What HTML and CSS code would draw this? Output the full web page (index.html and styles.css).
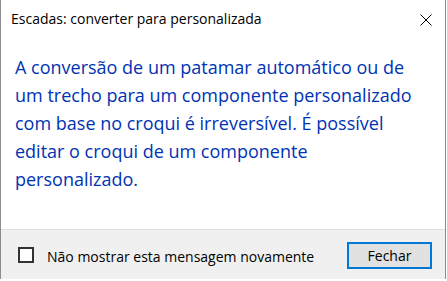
FILE: index.html
```html
<!DOCTYPE html>
<html lang="pt">
<head>
<meta charset="utf-8">
<title>Escadas: converter para personalizada</title>
<link rel="stylesheet" href="styles.css">
</head>
<body>
<div class="window">
  <div class="titlebar">
    <span class="title">Escadas: converter para personalizada</span>
    <span class="close" aria-label="Fechar">
      <svg width="12" height="12" viewBox="0 0 12 12"><path d="M0.5 0.5 L11.5 11.5 M11.5 0.5 L0.5 11.5" stroke="#000" stroke-width="1" fill="none"/></svg>
    </span>
  </div>
  <div class="content">
    <p class="instruction">A conversão de um patamar automático ou de<br>um trecho para um componente personalizado<br>com base no croqui é irreversível. É possível<br>editar o croqui de um componente<br>personalizado.</p>
  </div>
  <div class="footer">
    <label class="check">
      <span class="box"></span>
      <span class="label">Não mostrar esta mensagem novamente</span>
    </label>
    <button class="btn">Fechar</button>
  </div>
</div>
</body>
</html>
```
FILE: styles.css
```css
html, body {
  margin: 0;
  padding: 0;
  background: #ffffff;
}
body {
  font-family: "Open Sans", "Noto Sans", sans-serif;
}
.window {
  width: 444px;
  height: 279px;
  border-left: 1px solid #8c8c8c;
  border-right: 1px solid #8c8c8c;
  background: #ffffff;
  display: flex;
  flex-direction: column;
}
.titlebar {
  height: 40px;
  display: flex;
  align-items: flex-start;
  justify-content: space-between;
  box-sizing: border-box;
  padding: 9px 13px 0 10px;
}
.title {
  font-size: 14px;
  line-height: 20px;
  color: #000;
}
.close {
  display: flex;
  padding-top: 5px;
}
.content {
  flex: 1;
  padding: 13px 10px 0 14px;
}
.instruction {
  margin: 0;
  font-size: 18px;
  line-height: 28px;
  color: #0033b4;
  white-space: nowrap;
}
.footer {
  height: 50px;
  box-sizing: border-box;
  border-top: 1px solid #dfdfdf;
  background: #f0f0f0;
  display: flex;
  align-items: center;
  justify-content: space-between;
  padding: 0 13px 0 17px;
}
.check {
  display: flex;
  align-items: center;
  gap: 13px;
}
.box {
  width: 16px;
  height: 16px;
  box-sizing: border-box;
  border: 2px solid #333333;
  background: #ffffff;
}
.label {
  font-size: 14px;
  line-height: 20px;
  color: #000;
  padding-top: 4px;
}
.btn {
  width: 85px;
  height: 27px;
  box-sizing: border-box;
  border: 2px solid #0078d7;
  background: #e1e1e1;
  font-family: "Open Sans", "Noto Sans", sans-serif;
  font-size: 14px;
  color: #000;
  padding: 0;
  margin-top: 1px;
}
```
